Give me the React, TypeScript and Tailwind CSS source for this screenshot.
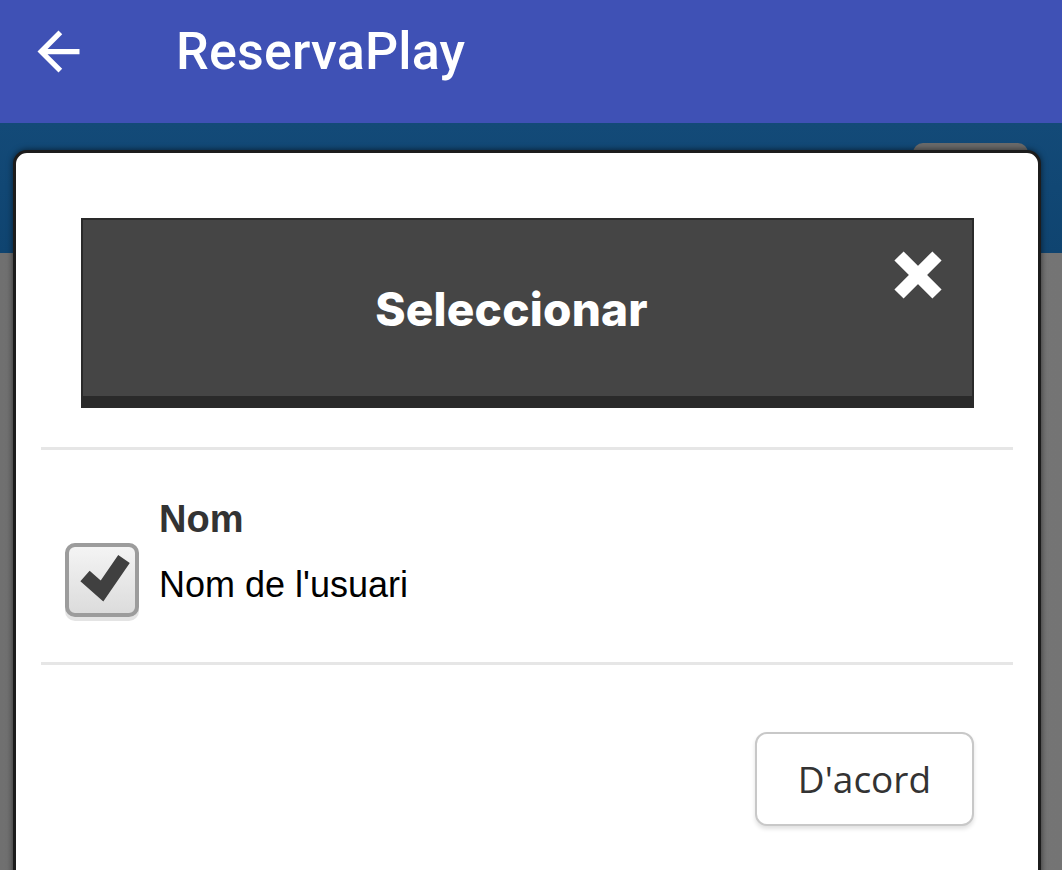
import { useState } from 'react'

function BackArrow() {
  return (
    <svg width="63" height="63" viewBox="0 0 24 24" className="fill-white">
      <path d="M20 11H7.83l5.59-5.59L12 4l-8 8 8 8 1.41-1.41L7.83 13H20v-2z" />
    </svg>
  )
}

function CloseX() {
  return (
    <svg width="54" height="54" viewBox="0 0 54 54">
      <path d="M8 8 L46 46 M46 8 L8 46" stroke="#fff" strokeWidth="13" strokeLinecap="butt" />
    </svg>
  )
}

function CheckBox({ checked, onToggle }: { checked: boolean; onToggle: () => void }) {
  return (
    <button
      onClick={onToggle}
      className="w-[74px] h-[78px] rounded-[10px] bg-[#e4e4e4] pb-[4px] shrink-0"
    >
      <div className="w-full h-full rounded-[10px] border-[4px] border-[#9c9c9c] bg-gradient-to-b from-[#f4f4f4] to-[#dcdcdc]">
        {checked && (
          <svg width="66" height="66" viewBox="0 0 66 66" className="block">
            <path
              d="M16 29 L33 44 L55 12"
              fill="none"
              stroke="#404040"
              strokeWidth="14"
              strokeLinejoin="miter"
              strokeLinecap="butt"
            />
          </svg>
        )}
      </div>
    </button>
  )
}

export default function App() {
  const [checked, setChecked] = useState(true)

  return (
    <div className="relative w-[1062px] h-[870px] overflow-hidden flex flex-col bg-[#777777]">
      {/* app bar */}
      <div className="h-[123px] shrink-0 bg-[#3f51b5] flex items-center">
        <div className="ml-[27px] mt-[-20px]">
          <BackArrow />
        </div>
        <h1
          className="ml-[86px] mt-[-20px] text-white text-[52px] font-medium tracking-[0.2px]"
          style={{ fontFamily: 'Roboto, "Noto Sans", sans-serif' }}
        >
          ReservaPlay
        </h1>
      </div>

      {/* underlying page, dimmed */}
      <div className="h-[130px] shrink-0 bg-gradient-to-b from-[#134a78] to-[#0f4470] flex justify-end pr-[34px] pt-[20px]">
        <div className="w-[115px] h-[40px] rounded-t-[10px] bg-[#6a6a6a]" />
      </div>
      <div className="flex-1 bg-gradient-to-r from-[#707070] via-[#7a7a7a] to-[#747474]" />

      {/* dialog */}
      <div className="absolute left-[13px] top-[150px] w-[1028px] h-[760px] bg-white rounded-[14px] border-[3px] border-[#1c1c1c] shadow-[0_0_6px_rgba(0,0,0,0.6)]">
        <div className="ml-[65px] mt-[65px] w-[893px] h-[190px] bg-[#2a2a2a] p-[2px] pb-[12px]">
          <div className="relative h-full bg-[#454545] flex items-center justify-center">
            <span
              className="text-white text-[46px] font-extrabold tracking-[0.2px] mt-[2px] mr-[32px]"
              style={{ fontFamily: 'Inter, "Noto Sans", sans-serif' }}
            >
              Seleccionar
            </span>
            <button className="absolute right-[27px] top-[28px]">
              <CloseX />
            </button>
          </div>
        </div>

        <div className="mx-[25px] mt-[39px] h-[3px] bg-[#e6e6e6]" />

        <div
          className="pl-[49px] pt-[47px] pb-[41px] flex items-end gap-[20px]"
          style={{ fontFamily: '"Liberation Sans", Arial, sans-serif' }}
        >
          <CheckBox checked={checked} onToggle={() => setChecked(!checked)} />
          <div className="flex flex-col pb-[14px]">
            <span className="text-[38px] font-bold text-[#333333] leading-[44px]">Nom</span>
            <span className="text-[36px] text-black leading-[44px] mt-[22px]">Nom de l'usuari</span>
          </div>
        </div>

        <div className="mx-[25px] h-[3px] bg-[#e6e6e6]" />

        <div className="flex justify-end pr-[64px] pt-[67px]">
          <button
            className="w-[219px] h-[94px] rounded-[12px] border-2 border-[#c8c8c8] bg-white shadow-[0_3px_4px_rgba(0,0,0,0.12)] text-[37px] text-[#333333]"
            style={{ fontFamily: '"Open Sans", "Noto Sans", sans-serif' }}
          >
            D'acord
          </button>
        </div>
      </div>
    </div>
  )
}
